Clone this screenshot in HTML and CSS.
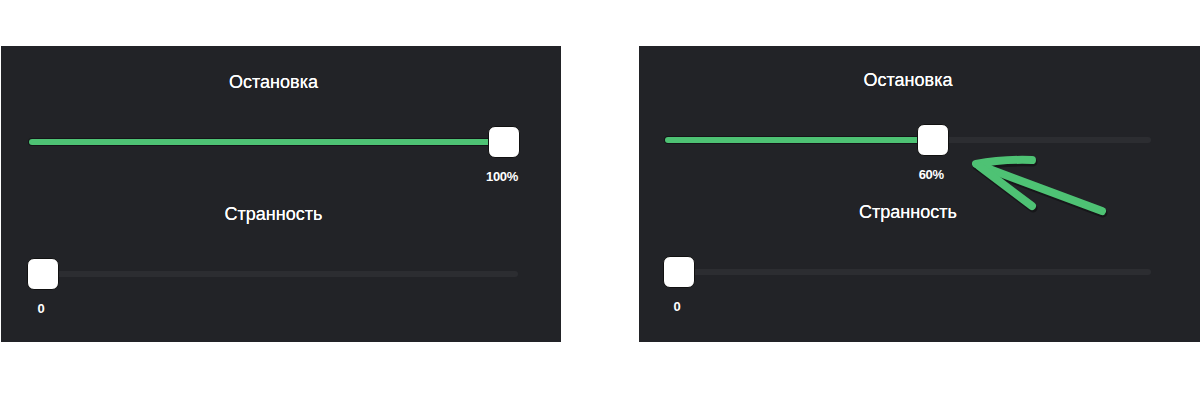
FILE: index.html
```html
<!DOCTYPE html>
<html lang="ru">
<head>
    <meta charset="UTF-8">
    <meta name="viewport" content="width=device-width, initial-scale=1.0">
    <title>Настройки</title>
    <link rel="stylesheet" href="styles.css">
</head>
<body>

<div class="shots">
    <div class="panel panel-left">
        <div class="controls">
            <div class="title">Остановка</div>
            <div class="slider">
                <div class="fill" style="width: calc(100% + 16px)"></div>
                <div class="thumb" style="left: 100%">
                    <span class="value">100%</span>
                </div>
            </div>

            <div class="title">Странность</div>
            <div class="slider">
                <div class="thumb" style="left: 0%">
                    <span class="value">0</span>
                </div>
            </div>
        </div>
    </div>

    <div class="panel panel-right">
        <div class="controls">
            <div class="title">Остановка</div>
            <div class="slider">
                <div class="fill" style="width: calc(55.5% + 16px)"></div>
                <div class="thumb" style="left: 55.5%">
                    <span class="value">60%</span>
                </div>
            </div>

            <div class="title">Странность</div>
            <div class="slider">
                <div class="thumb" style="left: 0%">
                    <span class="value">0</span>
                </div>
            </div>
        </div>

        <svg class="arrow" width="160" height="85" viewBox="0 0 160 85">
            <g fill="none" stroke-linecap="round" stroke-linejoin="round">
                <g stroke="rgba(0,0,0,0.35)" stroke-width="9" transform="translate(1,2)">
                    <path d="M72 15 Q42 14 16 19 L142 66"/>
                    <path d="M19 21 L72 61"/>
                </g>
                <g stroke="#4ec274" stroke-width="8">
                    <path d="M72 15 Q42 14 16 19 L142 66"/>
                    <path d="M19 21 L72 61"/>
                </g>
            </g>
        </svg>
    </div>
</div>

</body>
</html>
```

FILE: styles.css
```css
body {
    margin: 0;
    background: #fff;
    font-family: "Liberation Sans", Arial, sans-serif;
    color: #fff;
}

.shots {
    display: flex;
    padding-top: 46px;
    padding-left: 1px;
}

.panel {
    background-color: #222327;
    height: 296px;
    box-sizing: border-box;
    position: relative;
}

.panel-left {
    width: 560px;
    padding: 25px 0 0 26px;
}

.panel-right {
    width: 561px;
    margin-left: 78px;
    padding: 23px 0 0 24px;
}

.panel-left .controls {
    width: 493px;
}

.panel-right .controls {
    width: 490px;
}

.title {
    text-align: center;
    font-size: 18px;
    line-height: 22px;
    margin-bottom: 33px;
    text-shadow: 0 0 0.4px #fff;
}

.slider {
    position: relative;
    height: 32px;
    margin-right: 32px;
    margin-bottom: 45px;
}

.slider::before {
    content: "";
    position: absolute;
    left: 16px;
    right: -30px;
    top: 13px;
    height: 6px;
    border-radius: 3px;
    background-color: #2c2d31;
}

.fill {
    position: absolute;
    left: 2px;
    top: 13px;
    height: 6px;
    border-radius: 3px;
    background-color: #4ec274;
    box-shadow: 0 0 0 1px #141518;
}

.thumb {
    position: absolute;
    top: 0;
    width: 32px;
    height: 32px;
    box-sizing: border-box;
    background-color: #fff;
    border: 1px solid #111;
    border-radius: 7px;
}

.value {
    position: absolute;
    top: 42px;
    left: 50%;
    transform: translateX(calc(-50% - 2px));
    font-size: 13px;
    font-weight: bold;
    line-height: 15px;
    white-space: nowrap;
    letter-spacing: -0.3px;
}

.arrow {
    position: absolute;
    left: 321px;
    top: 99px;
}
```
